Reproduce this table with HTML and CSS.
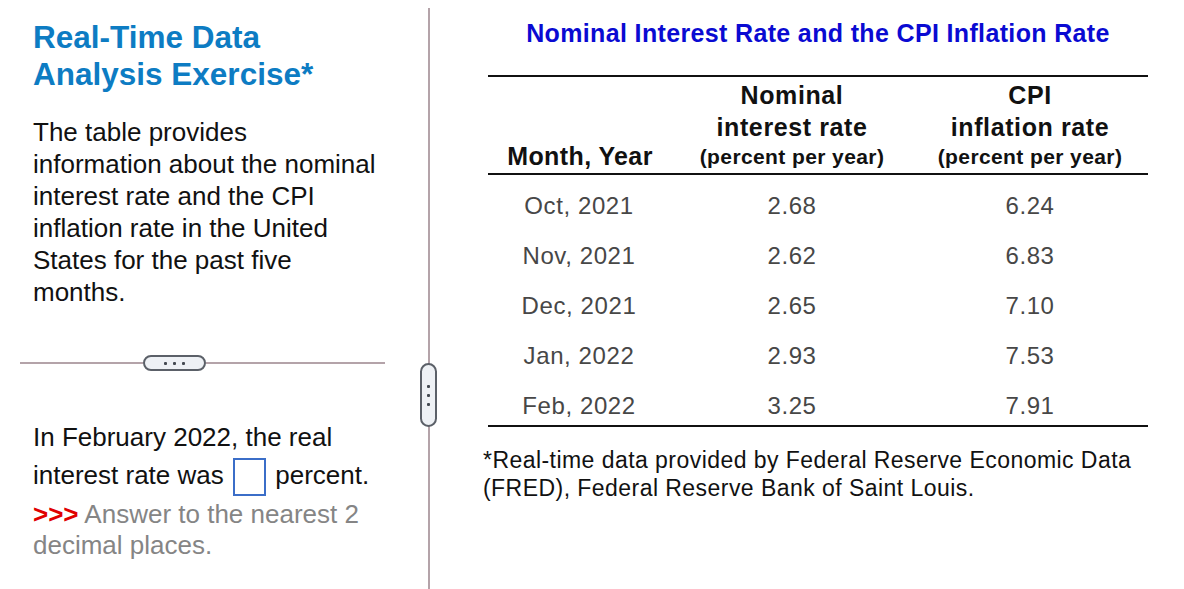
FILE: index.html
```html
<!DOCTYPE html>
<html lang="en">
<head>
<meta charset="utf-8">
<title>Real-Time Data Analysis Exercise</title>
<link rel="stylesheet" href="styles.css">
</head>
<body>
<div class="page">
  <section class="left">
    <div class="left-top">
      <h1 class="ex-title">Real-Time Data Analysis Exercise*</h1>
      <p class="intro">The table provides information about the nominal interest rate and the CPI inflation rate in the United States for the past five months.</p>
    </div>
    <div class="hsplit">
      <span class="hline hline-left"></span>
      <span class="hhandle"><i></i><i></i><i></i></span>
      <span class="hline"></span>
    </div>
    <div class="left-bottom">
      <p class="question">In February 2022, the real interest rate was <span class="answer-box"></span> percent.</p>
      <p class="hint"><b class="arrows">&gt;&gt;&gt;</b> Answer to the nearest 2 decimal places.</p>
    </div>
  </section>
  <div class="vsplit">
    <span class="vhandle"><i></i><i></i><i></i></span>
  </div>
  <section class="right">
    <div class="data-block">
      <h2 class="table-title">Nominal Interest Rate and the CPI Inflation Rate</h2>
      <table class="data">
        <thead>
          <tr>
            <th class="c1"><span class="hmonth">Month, Year</span></th>
            <th class="c2"><span class="hl">Nominal</span><span class="hl">interest rate</span><span class="hsub">(percent per year)</span></th>
            <th class="c3"><span class="hl">CPI</span><span class="hl">inflation rate</span><span class="hsub">(percent per year)</span></th>
          </tr>
        </thead>
        <tbody>
          <tr><td>Oct, 2021</td><td>2.68</td><td>6.24</td></tr>
          <tr><td>Nov, 2021</td><td>2.62</td><td>6.83</td></tr>
          <tr><td>Dec, 2021</td><td>2.65</td><td>7.10</td></tr>
          <tr><td>Jan, 2022</td><td>2.93</td><td>7.53</td></tr>
          <tr><td>Feb, 2022</td><td>3.25</td><td>7.91</td></tr>
        </tbody>
      </table>
      <p class="footnote">*Real-time data provided by Federal Reserve Economic Data (FRED), Federal Reserve Bank of Saint Louis.</p>
    </div>
  </section>
</div>
</body>
</html>
```
FILE: styles.css
```css
* { box-sizing: border-box; }
html, body { margin: 0; padding: 0; background: #fff; }
body { font-family: "Liberation Sans", Arial, sans-serif; color: #111; }

.page {
  display: flex;
  width: 1184px;
  height: 589px;
  overflow: hidden;
}

/* ---------- left panel ---------- */
.left {
  width: 428px;
  flex: none;
  display: flex;
  flex-direction: column;
}
.left-top { padding: 19px 0 0 33px; }
.ex-title {
  margin: 0;
  font-size: 31.5px;
  line-height: 37px;
  font-weight: bold;
  color: #0d7cc3;
  width: 340px;
}
.intro {
  margin: 23px 0 0;
  width: 345px;
  font-size: 26px;
  line-height: 32px;
  color: #111;
}

.hsplit {
  display: flex;
  align-items: center;
  margin: 47px 43px 0 20px;
  height: 16px;
}
.hline { flex: 1; height: 2px; background: #b4a3a9; }
.hline-left { flex: none; width: 123px; }
.hhandle {
  flex: none;
  width: 63px;
  height: 16px;
  border: 2px solid #5b6068;
  border-radius: 8px;
  background: #eef1f5;
  display: flex;
  align-items: center;
  justify-content: center;
  gap: 6px;
}
.hhandle i, .vhandle i {
  width: 3px; height: 3px; background: #444a52; border-radius: 1px; display: block;
}

.left-bottom { padding: 47px 30px 0 33px; }
.question {
  margin: 0;
  font-size: 26px;
  line-height: 38px;
  color: #111;
}
.answer-box {
  display: inline-block;
  width: 33px;
  height: 38px;
  border: 2px solid #3b6ec8;
  vertical-align: middle;
  margin: 0 2px;
}
.hint {
  margin: 3px 0 0;
  font-size: 26px;
  line-height: 31px;
  color: #858585;
}
.arrows { color: #e00000; font-weight: bold; }

/* ---------- splitter ---------- */
.vsplit {
  width: 2px;
  flex: none;
  background: #b4a3a9;
  margin-top: 8px;
  position: relative;
}
.vhandle {
  position: absolute;
  left: -8px;
  top: 355px;
  width: 17px;
  height: 64px;
  border: 2px solid #5b6068;
  border-radius: 9px;
  background: #eef1f5;
  display: flex;
  flex-direction: column;
  align-items: center;
  justify-content: center;
  gap: 6px;
}

/* ---------- right panel ---------- */
.right {
  flex: 1;
  padding: 0 0 0 58px;
}
.data-block { width: 660px; }
.table-title {
  margin: 0;
  padding-top: 17px;
  text-align: center;
  font-size: 25px;
  line-height: 32px;
  letter-spacing: 0.35px;
  font-weight: bold;
  color: #0a0ad2;
}
.data {
  margin-top: 26px;
  width: 660px;
  border-collapse: collapse;
  border-top: 2px solid #111;
  border-bottom: 2px solid #111;
}
.data th {
  vertical-align: bottom;
  text-align: center;
  padding: 2px 0 2px;
  border-bottom: 2px solid #111;
  font-weight: bold;
  color: #111;
}
.c1 { width: 184px; }
.c2 { width: 240px; }
.c3 { width: 236px; }
.hl {
  display: block;
  font-size: 25px;
  line-height: 32px;
  letter-spacing: 0.6px;
}
.hsub {
  display: block;
  font-size: 21px;
  line-height: 28px;
  letter-spacing: 0.4px;
}
.hmonth {
  display: block;
  font-size: 25px;
  line-height: 30px;
  letter-spacing: 0.4px;
}
.data td {
  text-align: center;
  font-size: 24px;
  line-height: 28px;
  letter-spacing: 0.6px;
  color: #474747;
  padding: 17px 0 5px;
}
.data td:first-child { padding-right: 2px; }
.footnote {
  margin: 19px 0 0 -5px;
  font-size: 23px;
  line-height: 28px;
  letter-spacing: 0.45px;
  color: #111;
}
```
